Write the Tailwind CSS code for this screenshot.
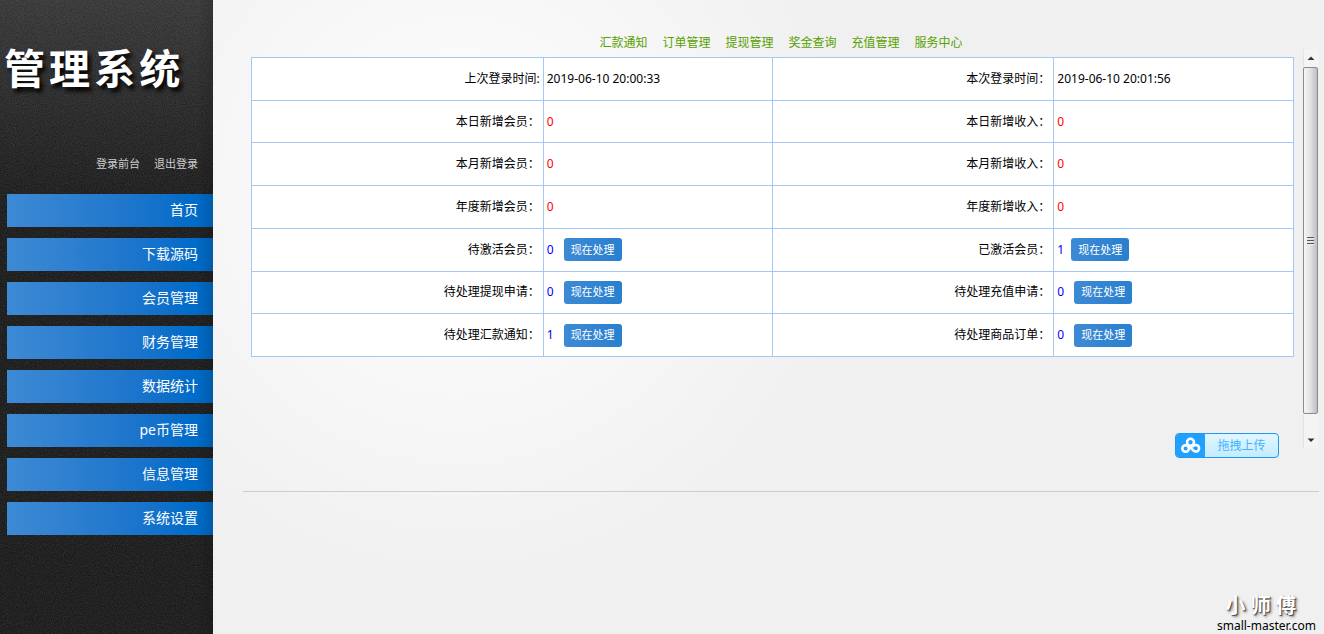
<!DOCTYPE html>
<html lang="zh-CN">
<head>
<meta charset="utf-8">
<meta name="viewport" content="width=device-width, initial-scale=1">
<title>管理系统</title>
<script src="https://cdn.jsdelivr.net/npm/@tailwindcss/browser@4"></script>
</head>
<body class="flex min-h-screen bg-[#f0f0f0] font-['Noto_Sans','Noto_Sans_CJK_SC',sans-serif] text-xs text-black">

<aside class="relative isolate w-[213px] shrink-0 overflow-hidden bg-linear-to-b from-[#2d2d2d] to-[#0b0b0b] to-[210px]">
  <!-- grain texture -->
  <svg class="absolute inset-0 -z-10 size-full opacity-20" aria-hidden="true">
    <filter id="grain" color-interpolation-filters="sRGB"><feTurbulence type="fractalNoise" baseFrequency="0.9" numOctaves="2" seed="4"/><feColorMatrix type="saturate" values="0"/><feComponentTransfer><feFuncA type="linear" slope="0" intercept="1"/></feComponentTransfer></filter>
    <rect width="100%" height="100%" filter="url(#grain)"/>
  </svg>
  <h1 class="pt-10 pl-1 text-[41px] leading-[56px] font-bold tracking-widest text-white [text-shadow:3px_4px_4px_#000]">管理系统</h1>
  <div class="mt-[58px] flex justify-end gap-[14px] pr-[15px] text-[11px] leading-5 text-[#cccccc]">
    <a href="#">登录前台</a>
    <a href="#">退出登录</a>
  </div>
  <nav class="mt-5 flex flex-col gap-[11px] pl-[7px] text-right text-sm leading-[31px] text-white *:bg-linear-to-r *:from-[#3d8ad4] *:to-[#006bc8] *:to-90% *:pr-[15px] *:pb-0.5">
    <a href="#">首页</a>
    <a href="#">下载源码</a>
    <a href="#">会员管理</a>
    <a href="#">财务管理</a>
    <a href="#">数据统计</a>
    <a href="#">pe币管理</a>
    <a href="#">信息管理</a>
    <a href="#">系统设置</a>
  </nav>
  <div class="pointer-events-none absolute inset-y-0 right-0 w-4 bg-linear-to-r from-transparent to-black/15"></div>
</aside>

<main class="flex min-w-0 flex-1 flex-col bg-[radial-gradient(circle_at_245px_190px,#ffffff_0px,#f0f0f0_400px)] pr-[5px] pl-[30px]">
  <div class="mt-[49px] flex items-stretch">
    <section class="-mt-4 min-w-0 flex-1 pr-[9px] pl-2">
      <nav class="flex justify-center gap-[15px] pl-[17px] leading-5 text-[#57a000]">
        <a href="#">汇款通知</a>
        <a href="#">订单管理</a>
        <a href="#">提现管理</a>
        <a href="#">奖金查询</a>
        <a href="#">充值管理</a>
        <a href="#">服务中心</a>
      </nav>
      <table class="mt-1 h-[300px] w-full table-fixed border-collapse bg-white leading-5 [&_td]:border [&_td]:border-[#a3c8f5] [&_td]:px-[3px] [&_td]:py-0 [&_th]:border [&_th]:border-[#a3c8f5] [&_th]:px-[3px] [&_th]:py-0 [&_th]:text-right [&_th]:font-normal [&_tr]:h-[42px]">
        <colgroup><col class="w-[28%]"><col class="w-[22%]"><col class="w-[27%]"><col class="w-[23%]"></colgroup>
        <tbody>
          <tr><th scope="row">上次登录时间:</th><td>2019-06-10 20:00:33</td><th scope="row">本次登录时间：</th><td>2019-06-10 20:01:56</td></tr>
          <tr><th scope="row">本日新增会员：</th><td class="text-[#ff0000]">0</td><th scope="row">本日新增收入：</th><td class="text-[#ff0000]">0</td></tr>
          <tr><th scope="row">本月新增会员：</th><td class="text-[#ff0000]">0</td><th scope="row">本月新增收入：</th><td class="text-[#ff0000]">0</td></tr>
          <tr><th scope="row">年度新增会员：</th><td class="text-[#ff0000]">0</td><th scope="row">年度新增收入：</th><td class="text-[#ff0000]">0</td></tr>
          <tr>
            <th scope="row">待激活会员：</th>
            <td><div class="flex items-center gap-[10px] text-[#0000ff]">0<button class="h-[23px] rounded-[3px] bg-linear-to-r from-[#3d8ad4] to-[#2880cf] px-[7px] text-[11px] text-white">现在处理</button></div></td>
            <th scope="row">已激活会员：</th>
            <td><div class="flex items-center gap-[7px] text-[#0000ff]">1<button class="h-[23px] rounded-[3px] bg-linear-to-r from-[#3d8ad4] to-[#2880cf] px-[7px] text-[11px] text-white">现在处理</button></div></td>
          </tr>
          <tr>
            <th scope="row">待处理提现申请：</th>
            <td><div class="flex items-center gap-[10px] text-[#0000ff]">0<button class="h-[23px] rounded-[3px] bg-linear-to-r from-[#3d8ad4] to-[#2880cf] px-[7px] text-[11px] text-white">现在处理</button></div></td>
            <th scope="row">待处理充值申请：</th>
            <td><div class="flex items-center gap-[10px] text-[#0000ff]">0<button class="h-[23px] rounded-[3px] bg-linear-to-r from-[#3d8ad4] to-[#2880cf] px-[7px] text-[11px] text-white">现在处理</button></div></td>
          </tr>
          <tr>
            <th scope="row">待处理汇款通知：</th>
            <td><div class="flex items-center gap-[10px] text-[#0000ff]">1<button class="h-[23px] rounded-[3px] bg-linear-to-r from-[#3d8ad4] to-[#2880cf] px-[7px] text-[11px] text-white">现在处理</button></div></td>
            <th scope="row">待处理商品订单：</th>
            <td><div class="flex items-center gap-[10px] text-[#0000ff]">0<button class="h-[23px] rounded-[3px] bg-linear-to-r from-[#3d8ad4] to-[#2880cf] px-[7px] text-[11px] text-white">现在处理</button></div></td>
          </tr>
        </tbody>
      </table>
      <div class="flex justify-end pt-[76px] pr-[15px]">
        <button class="flex h-[25px] w-[104px] items-stretch overflow-hidden rounded-[4px] border border-[#1e97f5] bg-linear-to-b from-[#e3f6ff] to-[#c2ecff] text-[#45b4fa]">
          <span class="flex w-[29px] items-center justify-center bg-[#22a0ff]">
            <svg class="h-[18px] w-5" viewBox="0 0 20 18" fill="none" stroke="#fff" stroke-width="2.6" stroke-linecap="round" aria-hidden="true"><circle cx="9.500" cy="5.300" r="3.500"/><circle cx="4.600" cy="11.500" r="3.300"/><path d="M7.300 8.200l4.900 5.100a3.300 3.300 0 1 0 0-4.100"/></svg>
          </span>
          <span class="flex-1 leading-[23px]">拖拽上传</span>
        </button>
      </div>
    </section>

    <!-- scrollbar -->
    <div class="mr-px mb-[9px] flex h-[399px] w-[15px] shrink-0 flex-col bg-[#f4f4f4] inset-shadow-[1px_0_0_#e3e3e3]" aria-hidden="true">
      <svg class="h-[18px] w-[15px]" viewBox="0 0 15 18"><path d="M4.500 11 8 7.500 11.500 11z" fill="#333"/></svg>
      <div class="flex h-[347px] flex-col items-center justify-center gap-px rounded-[2px] border border-[#8b8b8b] bg-linear-to-r from-[#f6f6f6] via-[#e2e2e5] to-[#bdbec3]">
        <i class="h-0.5 w-[7px] border-t border-[#555] bg-[#eee]"></i>
        <i class="h-0.5 w-[7px] border-t border-[#555] bg-[#eee]"></i>
        <i class="h-0.5 w-[7px] border-t border-[#555] bg-[#eee]"></i>
      </div>
      <svg class="mt-[18px] h-4 w-[15px]" viewBox="0 0 15 16"><path d="M4.500 6.500h7L8 10z" fill="#333"/></svg>
    </div>
  </div>
  <hr class="mt-[33px] border-[#cccccc]">
  <footer class="mt-auto flex flex-col items-end pr-[3px]">
    <div class="pr-5 text-xl leading-6 font-bold text-white [text-shadow:1px_1px_1px_#444,2px_2px_3px_#888]">小 师 傅</div>
    <div class="text-xs leading-4">small-master.com</div>
  </footer>
</main>
</body>
</html>
